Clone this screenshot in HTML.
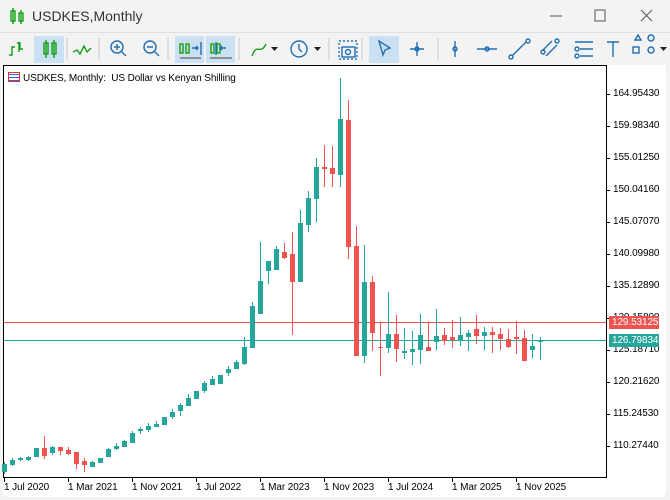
<!DOCTYPE html>
<html><head><meta charset="utf-8"><style>
*{margin:0;padding:0;box-sizing:border-box}
body{width:670px;height:500px;background:#f3f3f3;font-family:"Liberation Sans",sans-serif;overflow:hidden;position:relative}
.t{position:absolute;font-size:10px;letter-spacing:-0.1px;color:#000;white-space:nowrap}
</style></head><body>
<div style="position:absolute;left:0;top:0;width:670px;height:33px;background:#f3f3f3;border-bottom:1px solid #e0e0e0"></div>
<svg style="position:absolute;left:0;top:0" width="670" height="66">
<g fill="none" stroke="#14a014" stroke-width="1.4">
<rect x="11" y="11" width="4" height="10"/><line x1="13" y1="8" x2="13" y2="24"/><rect x="19" y="13" width="4" height="8"/><line x1="21" y1="10" x2="21" y2="24"/>
</g>
<text x="32" y="21" font-size="14" fill="#333" font-family="Liberation Sans">USDKES,Monthly</text>
<g stroke="#555" stroke-width="1" fill="none"><line x1="550" y1="16" x2="562" y2="16"/><rect x="595" y="10" width="10" height="11"/><line x1="641" y1="10" x2="652" y2="21"/><line x1="652" y1="10" x2="641" y2="21"/></g>
<rect x="34" y="36" width="30" height="27" fill="#cce0f4"/>
<rect x="175" y="36" width="29" height="27" fill="#cce0f4"/>
<rect x="206" y="36" width="29" height="27" fill="#cce0f4"/>
<rect x="369" y="36" width="30" height="27" fill="#cce0f4"/>
<g fill="none" stroke="#14a014" stroke-width="1.4">
<path d="M9 55h3v-8h3M19 42v10M17 43h3v6h3"/>
<rect x="44" y="43" width="4" height="11"/><line x1="46" y1="40" x2="46" y2="58"/><rect x="52" y="43" width="4" height="11"/><line x1="54" y1="40" x2="54" y2="58"/>
<path d="M73 52l4-2 3 4 4-8 3 6 4-4"/>
<rect x="180" y="44" width="3" height="9"/><rect x="186" y="44" width="3" height="9"/><rect x="211" y="44" width="3" height="9"/><rect x="217" y="44" width="3" height="9"/>
<path d="M252 56c5-14 8 0 14-12"/>
</g>
<g fill="none" stroke="#1f6fb2" stroke-width="1.4">
<circle cx="117" cy="47" r="6"/><path d="M121 51l5 5M114 47h6M117 44v6"/>
<circle cx="150" cy="47" r="6"/><path d="M154 51l5 5M147 47h6"/>
<path d="M192 48h6M196 46l2 2-2 2M201 42v13M226 48h-6M222 46l-2 2 2 2M216 42v13"/>
<path d="M180 58h21M210 58h22" stroke="#777"/>
<circle cx="299" cy="49" r="8"/><path d="M299 44v5l3 3"/>
<rect x="339" y="41" width="18" height="18" stroke-dasharray="2 2"/><rect x="342" y="47" width="13" height="10"/><circle cx="348" cy="52" r="2.5"/>
<path d="M379 41l4 14 2-5 5-2z"/>
<path d="M410 49h14M417 42v14"/><circle cx="417" cy="49" r="2"/>
<path d="M455 41v16"/><circle cx="455" cy="49" r="2"/>
<path d="M477 49h20"/><circle cx="487" cy="49" r="2"/>
<path d="M512 56l14-14"/><circle cx="511" cy="57" r="2"/><circle cx="528" cy="41" r="2"/>
<path d="M542 51l10-10M546 56l11-11"/><circle cx="557" cy="41" r="2"/><circle cx="543" cy="52" r="2"/>
<path d="M575 42h18M580 49h13M580 56h13"/><circle cx="577" cy="49" r="2"/><circle cx="577" cy="56" r="2"/>
<path d="M607 42h12M613 42v15"/>
<path d="M635 40l3-5 3 5z"/><circle cx="651" cy="38" r="3"/><rect x="633" y="47" width="6" height="6"/><circle cx="651" cy="50" r="3"/>
</g>
<g fill="#222"><path d="M271 47h7l-3.5 4zM314 47h7l-3.5 4zM660 47h7l-3.5 4z"/></g>
<g stroke="#c8c8c8"><line x1="67" y1="38" x2="67" y2="60"/><line x1="99" y1="38" x2="99" y2="60"/><line x1="168" y1="38" x2="168" y2="60"/><line x1="239" y1="38" x2="239" y2="60"/><line x1="329" y1="38" x2="329" y2="60"/><line x1="362" y1="38" x2="362" y2="60"/><line x1="438" y1="38" x2="438" y2="60"/></g>
</svg>
<div style="position:absolute;left:3px;top:65px;width:663px;height:432px;background:#fff;border-radius:0 0 6px 6px"></div>
<svg id="c" style="position:absolute;left:0;top:0" width="670" height="500"></svg>
<div class="t" style="left:8px;top:72px;font-size:10px">
<span style="display:inline-block;width:12px;height:10px;border:1px solid #d33;vertical-align:-1px;margin-right:3px;background:repeating-linear-gradient(#fff 0 1px,#36c 1px 2px,#fff 2px 3px)"></span>USDKES, Monthly:&nbsp; US Dollar vs Kenyan Shilling</div>
<div class="t" style="left:613px;top:88px">164.95430</div>
<div class="t" style="left:613px;top:120px">159.98340</div>
<div class="t" style="left:613px;top:152px">155.01250</div>
<div class="t" style="left:613px;top:184px">150.04160</div>
<div class="t" style="left:613px;top:216px">145.07070</div>
<div class="t" style="left:613px;top:248px">140.09980</div>
<div class="t" style="left:613px;top:280px">135.12890</div>
<div class="t" style="left:613px;top:312px">130.15800</div>
<div class="t" style="left:613px;top:344px">125.18710</div>
<div class="t" style="left:613px;top:376px">120.21620</div>
<div class="t" style="left:613px;top:408px">115.24530</div>
<div class="t" style="left:613px;top:440px">110.27440</div>
<div class="t" style="left:609px;top:316px;width:50px;height:13px;background:#ef5350;color:#fff;padding-left:3px;line-height:13px">129.53125</div>
<div class="t" style="left:609px;top:334px;width:50px;height:13px;background:#26a69a;color:#fff;padding-left:3px;line-height:13px">126.79834</div>
<div class="t" style="left:4px;top:482px">1 Jul 2020</div>
<div class="t" style="left:68px;top:482px">1 Mar 2021</div>
<div class="t" style="left:132px;top:482px">1 Nov 2021</div>
<div class="t" style="left:196px;top:482px">1 Jul 2022</div>
<div class="t" style="left:260px;top:482px">1 Mar 2023</div>
<div class="t" style="left:324px;top:482px">1 Nov 2023</div>
<div class="t" style="left:388px;top:482px">1 Jul 2024</div>
<div class="t" style="left:452px;top:482px">1 Mar 2025</div>
<div class="t" style="left:516px;top:482px">1 Nov 2025</div>
<script>
var d=[[464,472,462,474,1],[460,465,458,466,1],[458,460,457,461,1],[457,460,456,461,1],[448,457,448,457,1],[448,456,436,459,0],[447,453,446,455,1],[447,451,447,455,0],[450,454,447,455,0],[452,464,452,469,0],[461,465,458,472,0],[462,467,461,467,1],[458,463,458,463,1],[449,457,448,457,1],[446,449,443,450,1],[441,447,440,447,1],[433,443,431,443,1],[429,431,427,434,1],[426,430,423,432,1],[424,427,421,427,1],[417,425,417,425,1],[412,417,409,419,1],[405,411,403,416,1],[398,406,394,406,1],[391,399,391,399,1],[383,391,381,393,1],[379,385,376,385,1],[375,384,375,384,1],[369,373,366,376,1],[362,369,360,369,1],[347,364,337,365,1],[306,348,302,348,1],[281,314,242,314,1],[261,271,261,284,1],[249,270,246,270,1],[252,258,243,259,0],[254,282,232,335,0],[223,282,210,282,1],[198,225,191,232,1],[167,199,158,222,1],[167,169,145,187,0],[168,174,146,187,0],[119,175,78,187,1],[120,247,100,259,0],[246,356,226,356,0],[282,356,245,363,1],[282,333,276,351,0],[347,348,322,376,0],[334,348,292,353,1],[334,349,315,362,0],[351,353,328,359,1],[349,352,331,365,1],[335,350,314,364,1],[347,351,322,351,0],[336,342,309,350,1],[335,341,328,345,0],[337,340,320,348,0],[335,341,317,346,1],[333,337,330,351,1],[329,336,315,344,0],[332,336,327,350,1],[332,335,327,353,0],[334,339,328,350,0],[339,347,329,348,0],[337,339,321,354,0],[338,361,330,361,0],[346,350,334,358,1],[340,342,337,360,1]];
var s='<rect x="3.5" y="65.5" width="603" height="412" fill="none" stroke="#000"/>';
s+='<line x1="4" y1="322.5" x2="606" y2="322.5" stroke="#ef5350"/><line x1="4" y1="340.5" x2="606" y2="340.5" stroke="#26a69a"/>';
d.forEach(function(c,i){var x=4+8*i,col=c[4]?'#26a69a':'#ef5350';
s+='<line x1="'+(x+.5)+'" y1="'+c[2]+'" x2="'+(x+.5)+'" y2="'+c[3]+'" stroke="'+col+'"/>';
var h=Math.max(1,c[1]-c[0]);s+='<rect x="'+(x-2)+'" y="'+c[0]+'" width="5" height="'+h+'" fill="'+col+'"/>';});
for(var k=0;k<9;k++){var x=4+64*k;s+='<line x1="'+(x+.5)+'" y1="478" x2="'+(x+.5)+'" y2="482" stroke="#000"/>';}
for(var k=0;k<12;k++){var y=94+32*k;s+='<line x1="606" y1="'+(y+.5)+'" x2="610" y2="'+(y+.5)+'" stroke="#000"/>';}
document.getElementById('c').innerHTML=s;
</script>
</body></html>
